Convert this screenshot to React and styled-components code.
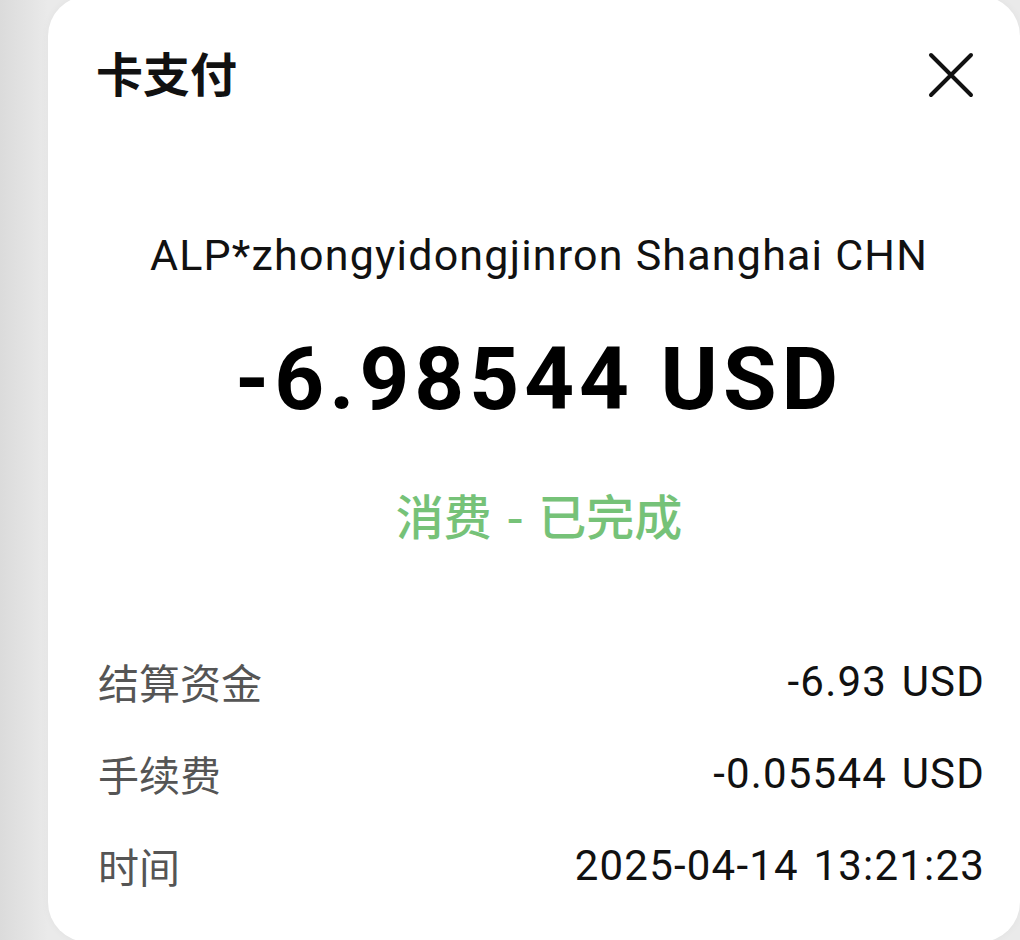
import React from "react";
import styled, { createGlobalStyle } from "styled-components";

const GlobalStyle = createGlobalStyle`
	html, body {
		margin: 0;
		padding: 0;
		height: 100%;
		overflow: hidden;
	}
	body {
		background: linear-gradient(to right, #dbdbdb 0%, #e4e4e4 30px, #eaeaea 48px);
		font-family: Roboto, "Noto Sans CJK SC", sans-serif;
	}
`;

const rows = [
	{ label: "结算资金", value: "-6.93 USD" },
	{ label: "手续费", value: "-0.05544 USD" },
	{ label: "时间", value: "2025-04-14 13:21:23" },
];

function App() {
	return (
		<>
			<GlobalStyle />
			<Page>
				<Card>
					<Header>
						<Title>卡支付</Title>
						<CloseButton aria-label="关闭">
							<svg width="48" height="48" viewBox="0 0 48 48">
								<path
									d="M4 4 L44 44 M44 4 L4 44"
									stroke="#111"
									strokeWidth="4"
									strokeLinecap="round"
								/>
							</svg>
						</CloseButton>
					</Header>

					<Merchant>ALP*zhongyidongjinron Shanghai CHN</Merchant>
					<Amount>-6.98544 USD</Amount>
					<Status>消费 - 已完成</Status>

					<Details>
						{rows.map((row) => (
							<Row key={row.label}>
								<Label>{row.label}</Label>
								<Value>{row.value}</Value>
							</Row>
						))}
					</Details>
				</Card>
			</Page>
		</>
	);
}

const Page = styled.div`
	display: flex;
	padding-left: 48px;
	margin-top: -4px;
`;

const Card = styled.div`
	width: 974px;
	height: 946px;
	box-sizing: border-box;
	padding: 48px 40px 0 50px;
	background: #fff;
	border-radius: 40px;
	box-shadow: 0 0 8px rgba(0, 0, 0, 0.04);
	display: flex;
	flex-direction: column;
`;

const Header = styled.div`
	display: flex;
	align-items: center;
	justify-content: space-between;
	height: 62px;
`;

const Title = styled.h1`
	margin: 0 0 0 -2px;
	padding-bottom: 6px;
	font-family: "Noto Sans CJK SC", sans-serif;
	font-size: 47px;
	font-weight: 700;
	line-height: 56px;
	color: #111;
`;

const CloseButton = styled.button`
	display: flex;
	align-items: center;
	justify-content: center;
	width: 48px;
	height: 48px;
	margin-right: 5px;
	padding: 0;
	border: none;
	background: none;
	cursor: pointer;
`;

const Merchant = styled.div`
	margin-top: 121px;
	text-align: center;
	font-family: Roboto, sans-serif;
	font-size: 43px;
	letter-spacing: 1.2px;
	line-height: 56px;
	color: #111;
`;

const Amount = styled.div`
	margin-top: 46px;
	text-align: center;
	font-family: Roboto, sans-serif;
	font-size: 87px;
	font-weight: 700;
	letter-spacing: 5px;
	line-height: 100px;
	color: #000;
`;

const Status = styled.div`
	margin-top: 55px;
	text-align: center;
	font-family: "Noto Sans CJK SC", sans-serif;
	font-size: 48px;
	font-weight: 500;
	line-height: 60px;
	color: #76c278;
	word-spacing: 4px;
`;

const Details = styled.div`
	margin-top: 91px;
	display: flex;
	flex-direction: column;
`;

const Row = styled.div`
	display: flex;
	align-items: center;
	justify-content: space-between;
	height: 92px;
`;

const Label = styled.span`
	font-family: "Noto Sans CJK SC", sans-serif;
	font-size: 41px;
	color: #555;
`;

const Value = styled.span`
	margin-right: -5px;
	font-family: Roboto, sans-serif;
	font-size: 42px;
	letter-spacing: 1.2px;
	word-spacing: 3px;
	color: #111;
`;

export default App;
